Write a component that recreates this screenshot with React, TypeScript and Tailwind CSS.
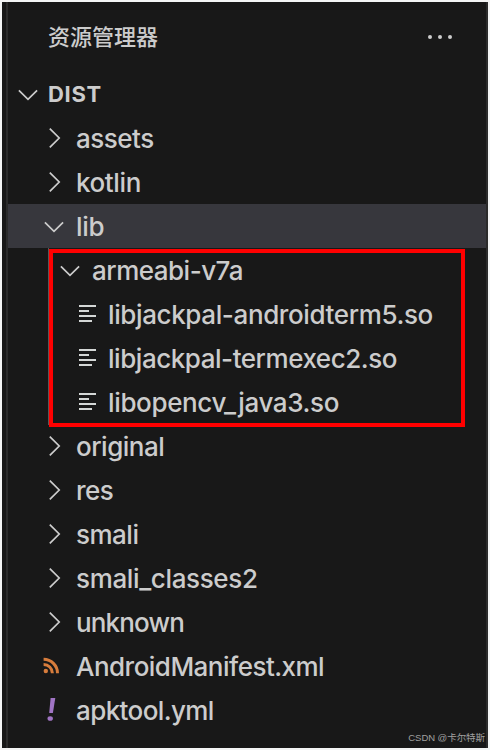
import type { ReactNode } from "react";

type Icon = "right" | "down" | "file" | "rss" | "yml";

type Item = {
  name: string;
  icon: Icon;
  indent: string;
  tracking: string;
  selected?: boolean;
};

const before: Item[] = [
  { name: "assets", icon: "right", indent: "pl-[30px]", tracking: "tracking-[-0.5px]" },
  { name: "kotlin", icon: "right", indent: "pl-[30px]", tracking: "tracking-[-0.4px]" },
  { name: "lib", icon: "down", indent: "pl-[30px]", tracking: "tracking-[-0.3px]", selected: true },
];

const highlighted: Item[] = [
  { name: "armeabi-v7a", icon: "down", indent: "pl-[46px]", tracking: "tracking-[-0.5px]" },
  { name: "libjackpal-androidterm5.so", icon: "file", indent: "pl-[62px]", tracking: "tracking-[-0.38px]" },
  { name: "libjackpal-termexec2.so", icon: "file", indent: "pl-[62px]", tracking: "tracking-[-0.46px]" },
  { name: "libopencv_java3.so", icon: "file", indent: "pl-[62px]", tracking: "tracking-[-0.36px]" },
];

const after: Item[] = [
  { name: "original", icon: "right", indent: "pl-[30px]", tracking: "tracking-[-0.5px]" },
  { name: "res", icon: "right", indent: "pl-[30px]", tracking: "tracking-[-0.6px]" },
  { name: "smali", icon: "right", indent: "pl-[30px]", tracking: "tracking-[-0.5px]" },
  { name: "smali_classes2", icon: "right", indent: "pl-[30px]", tracking: "tracking-[-0.36px]" },
  { name: "unknown", icon: "right", indent: "pl-[30px]", tracking: "tracking-[-0.85px]" },
  { name: "AndroidManifest.xml", icon: "rss", indent: "pl-[30px]", tracking: "tracking-[-0.52px]" },
  { name: "apktool.yml", icon: "yml", indent: "pl-[30px]", tracking: "tracking-[-0.6px]" },
];

const drawings: Record<Icon, ReactNode> = {
  right: <path d="M11.8 12.7 21.2 22 11.8 31.3" stroke="#cccccc" strokeWidth="1.7" />,
  down: <path d="M6.9 18.3 16 27.3 25.1 18.3" stroke="#cccccc" strokeWidth="1.7" />,
  file: <path d="M9 14H26M9 19H19M9 24H26M9 29H22" stroke="#d4d7d6" strokeWidth="1.9" />,
  rss: (
    <>
      <circle cx="7.8" cy="27" r="2.2" fill="#d67c3c" />
      <path d="M5.6 20.5A8.8 8.8 0 0 1 14.4 29.2M5.6 15.3A13.9 13.9 0 0 1 19.5 29.2" stroke="#d67c3c" strokeWidth="3" />
    </>
  ),
  yml: (
    <>
      <path d="M12.6 10H17.3L14.9 25H11.2Z" fill="#a074c4" />
      <ellipse cx="12.2" cy="30.5" rx="2.7" ry="2.3" fill="#a074c4" />
    </>
  ),
};

function RowIcon({ icon }: { icon: Icon }) {
  return (
    <svg className="h-11 w-8 shrink-0" viewBox="0 0 32 44" fill="none">
      {drawings[icon]}
    </svg>
  );
}

function Row({ item }: { item: Item }) {
  return (
    <div className={`flex h-11 items-center gap-1.5 ${item.indent} ${item.selected ? "bg-[#37373d]" : ""}`}>
      <RowIcon icon={item.icon} />
      <span className={`whitespace-nowrap pt-0.5 text-[26px] font-[460] leading-[44px] ${item.tracking}`}>
        {item.name}
      </span>
    </div>
  );
}

export default function App() {
  return (
    <div className="h-[750px] w-[490px] bg-[#f4f5f5] p-0.5 font-['Inter','Noto_Sans_CJK_SC',sans-serif] text-[#cccccc]">
      <div className="h-full bg-[#181818] pl-1">
        <div className="relative h-full border-x-2 border-[#2b2b2b]">
          <header className="flex h-[70px] items-center justify-between pl-10 pr-[33px]">
            <h1 className="text-[22px] font-medium leading-[44px]">资源管理器</h1>
            <svg className="h-8 w-[26px]" viewBox="0 0 26 32" fill="#cccccc">
              <circle cx="3" cy="16" r="2" />
              <circle cx="13" cy="16" r="2" />
              <circle cx="23" cy="16" r="2" />
            </svg>
          </header>

          <div className="flex h-11 items-center gap-1 pl-1">
            <RowIcon icon="down" />
            <span className="text-[22px] font-bold leading-[44px] tracking-[0.7px]">DIST</span>
          </div>

          {before.map((item) => (
            <Row key={item.name} item={item} />
          ))}

          <div className="relative">
            {highlighted.map((item) => (
              <Row key={item.name} item={item} />
            ))}
            <div className="absolute left-10 top-0 h-[177px] w-px bg-[#585858]" />
            <div className="absolute left-[41px] top-[0.6px] h-[178px] w-[416px] border-4 border-[#ff0000]" />
          </div>

          {after.map((item) => (
            <Row key={item.name} item={item} />
          ))}

          <div className="absolute bottom-[1px] right-px whitespace-nowrap font-['Liberation_Sans','Noto_Sans_CJK_SC',sans-serif] text-[9.5px] leading-[18px] tracking-[-0.05px] text-[#a0a0a0]">
            CSDN @卡尔特斯
          </div>
        </div>
      </div>
    </div>
  );
}
